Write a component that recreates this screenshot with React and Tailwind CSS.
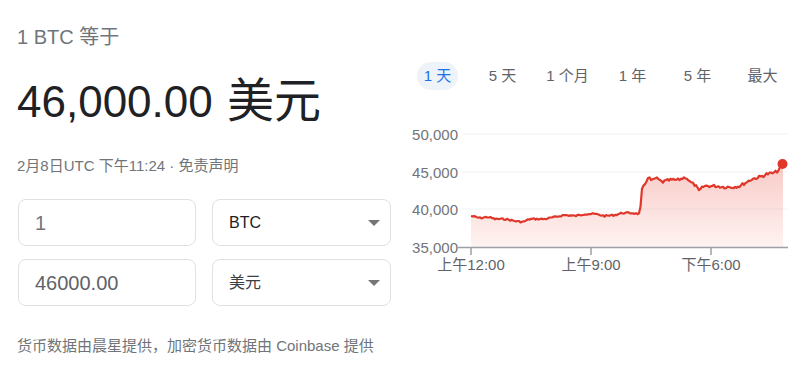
import React from 'react';

const FONT = { fontFamily: '"Liberation Sans", Arial, "Noto Sans CJK SC", sans-serif' };

const tabs = ['1 天', '5 天', '1 个月', '1 年', '5 年', '最大'];

// rough shape of the day, x/y in page pixels
const keys = [
  [471, 216], [480, 218], [488, 217], [495, 219], [505, 219], [515, 221], [523, 222],
  [530, 219], [545, 219], [555, 217], [565, 215], [575, 216], [585, 214], [595, 214],
  [605, 216], [615, 215], [622, 213], [632, 213], [640, 214], [642, 190], [645, 184],
  [648, 177], [652, 181], [656, 178], [662, 182], [670, 180], [678, 180], [686, 177],
  [690, 182], [695, 185], [699, 191], [704, 186], [715, 186], [725, 187], [732, 187],
  [740, 186], [745, 183], [752, 179], [760, 177], [767, 174], [774, 173], [779, 170],
  [783, 164],
];

const buildLine = () => {
  let seed = 7;
  const rand = () => {
    seed = (seed * 9301 + 49297) % 233280;
    return seed / 233280;
  };
  const pts = [];
  let k = 0;
  for (let x = 471; x <= 783; x += 1.5) {
    while (k < keys.length - 2 && keys[k + 1][0] < x) k++;
    const [x0, y0] = keys[k];
    const [x1, y1] = keys[k + 1];
    const t = Math.min(1, Math.max(0, (x - x0) / (x1 - x0)));
    let y = y0 + (y1 - y0) * t;
    const amp = x > 640 ? 3 : 1.6;
    if (x < 782) y += (rand() - 0.5) * amp;
    pts.push([x, y]);
  }
  pts.push([783, 164]);
  return pts;
};

const pts = buildLine();
const linePath = pts.map((p, i) => `${i ? 'L' : 'M'}${p[0].toFixed(1)} ${p[1].toFixed(1)}`).join(' ');
const areaPath = `${linePath} L783 248 L471 248 Z`;

const Chart = () => (
  <svg width="400" height="165" viewBox="400 115 400 165" className="block mt-[25px]">
    <defs>
      <linearGradient id="fill" x1="0" y1="0" x2="0" y2="1">
        <stop offset="0" stopColor="#ea4335" stopOpacity="0.28" />
        <stop offset="1" stopColor="#ea4335" stopOpacity="0.06" />
      </linearGradient>
    </defs>
    {[134, 172, 209].map((y) => (
      <line key={y} x1="462" x2="788" y1={y} y2={y} stroke="#f1f3f4" strokeWidth="1" />
    ))}
    <path d={areaPath} fill="url(#fill)" />
    <path d={linePath} fill="none" stroke="#e0372b" strokeWidth="2.2" strokeLinejoin="round" />
    <circle cx="782.5" cy="164" r="5" fill="#e0372b" />
    <line x1="458" x2="788" y1="247.5" y2="247.5" stroke="#9aa0a6" strokeWidth="1.5" />
    {[471, 591, 711].map((x) => (
      <line key={x} x1={x} x2={x} y1="247" y2="255" stroke="#9aa0a6" strokeWidth="1.5" />
    ))}
    <g style={FONT} fontSize="15" fill="#70757a" textAnchor="end">
      <text x="458" y="139.5">50,000</text>
      <text x="458" y="177.5">45,000</text>
      <text x="458" y="214.5">40,000</text>
      <text x="458" y="252.5">35,000</text>
    </g>
    <g style={FONT} fontSize="15" fill="#5f6368" textAnchor="middle">
      <text x="471" y="270">上午12:00</text>
      <text x="591" y="270">上午9:00</text>
      <text x="711" y="270">下午6:00</text>
    </g>
  </svg>
);

const Caret = () => (
  <svg width="12" height="6" viewBox="0 0 12 6" className="block">
    <path d="M0 0 L12 0 L6 6 Z" fill="#757575" />
  </svg>
);

const App = () => {
  return (
    <div className="w-[804px] h-[372px] flex bg-white overflow-hidden" style={FONT}>
      <div className="w-[391px] pl-[17px] shrink-0">
        <div className="mt-[25px] h-[24px] leading-[24px] text-[20px] text-[#70757a] whitespace-nowrap">1 BTC 等于</div>
        <div className="mt-[28px] h-[48px] leading-[48px] text-[44px] text-[#202124] whitespace-nowrap">
          46,000.00 <span className="ml-[2px] text-[47px] leading-[48px]">美元</span>
        </div>
        <div className="mt-[31px] h-[20px] leading-[20px] text-[15px] text-[#70757a] whitespace-nowrap">
          2月8日UTC 下午11:24 · <span>免责声明</span>
        </div>
        <div className="mt-[23px] pl-px flex flex-col gap-[13px]">
          <div className="flex gap-[16px]">
            <div className="w-[178px] h-[47px] rounded-lg border border-[#dfe1e5] flex items-center px-4 text-[20px] text-[#70757a]">1</div>
            <div className="w-[179px] h-[47px] rounded-lg border border-[#dfe1e5] flex items-center justify-between pl-4 pr-[10px] text-[16px] text-[#202124]">
              <span>BTC</span>
              <Caret />
            </div>
          </div>
          <div className="flex gap-[16px]">
            <div className="w-[178px] h-[47px] rounded-lg border border-[#dfe1e5] flex items-center px-4 text-[20px] text-[#5f6368]">46000.00</div>
            <div className="w-[179px] h-[47px] rounded-lg border border-[#dfe1e5] flex items-center justify-between pl-4 pr-[10px] text-[16px] text-[#3c4043]">
              <span>美元</span>
              <Caret />
            </div>
          </div>
        </div>
        <div className="mt-[30px] h-[20px] leading-[20px] text-[15px] text-[#70757a] whitespace-nowrap">
          货币数据由晨星提供，加密货币数据由 Coinbase 提供
        </div>
      </div>
      <div className="ml-[9px] w-[400px] shrink-0">
        <div className="mt-[62px] h-[28px] px-[5px] flex">
          {tabs.map((t, i) => (
            <div key={t} className="flex-1 flex justify-center items-center">
              <span
                className={
                  i === 0
                    ? 'h-[28px] px-[7px] rounded-full bg-[#eef2f9] text-[#1a73e8] text-[15px] leading-[28px] whitespace-nowrap'
                    : 'h-[28px] text-[#5f6368] text-[15px] leading-[28px] whitespace-nowrap'
                }
              >
                {t}
              </span>
            </div>
          ))}
        </div>
        <Chart />
      </div>
    </div>
  );
};

export default App;
